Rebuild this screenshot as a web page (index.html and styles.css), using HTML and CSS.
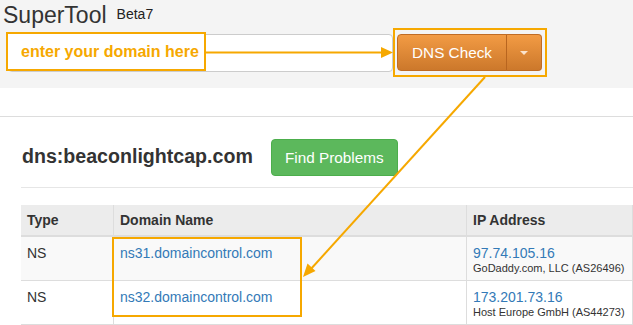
FILE: index.html
```html
<!DOCTYPE html>
<html lang="en">
<head>
<meta charset="utf-8">
<title>SuperTool</title>
<link rel="stylesheet" href="styles.css">
</head>
<body>
<div class="page">
  <header class="topbar">
    <div class="brand">
      <span class="brand-name">SuperTool</span>
      <span class="brand-tag">Beta7</span>
    </div>
    <form class="search">
      <input class="search-input" type="text" aria-label="domain">
      <div class="btn-group">
        <button type="button" class="btn-orange btn-main">DNS Check</button>
        <button type="button" class="btn-orange btn-caret"><span class="caret"></span></button>
      </div>
    </form>
  </header>

  <section class="panel">
    <div class="panel-head">
      <h2 class="panel-title">dns:beaconlightcap.com</h2>
      <button type="button" class="btn-green">Find Problems</button>
    </div>
    <hr class="divider">
    <table class="results">
      <thead>
        <tr>
          <th class="col-type">Type</th>
          <th class="col-name">Domain Name</th>
          <th class="col-ip">IP Address</th>
        </tr>
      </thead>
      <tbody>
        <tr class="odd">
          <td>NS</td>
          <td><a href="#" class="link">ns31.domaincontrol.com</a></td>
          <td><a href="#" class="link">97.74.105.16</a><div class="owner">GoDaddy.com, LLC (AS26496)</div></td>
        </tr>
        <tr>
          <td>NS</td>
          <td><a href="#" class="link">ns32.domaincontrol.com</a></td>
          <td><a href="#" class="link">173.201.73.16</a><div class="owner">Host Europe GmbH (AS44273)</div></td>
        </tr>
      </tbody>
    </table>
  </section>

  <div class="note note-input">enter your domain here</div>
  <svg class="annotations" width="633" height="325" viewBox="0 0 633 325" aria-hidden="true">
    <line x1="206" y1="52.5" x2="384" y2="52.5" class="ann-line"/>
    <polygon points="381,47 393,52.5 381,58" class="ann-fill"/>
    <rect x="394" y="29" width="152" height="47" class="ann-line"/>
    <line x1="485" y1="77" x2="310" y2="270" class="ann-line"/>
    <polygon points="303,277 315.5,271 307.5,263.5" class="ann-fill"/>
    <rect x="113" y="238" width="188" height="78" class="ann-line"/>
  </svg>
</div>
</body>
</html>
```

FILE: styles.css
```css
* { box-sizing: border-box; }

html, body {
  margin: 0;
  padding: 0;
  background: #fff;
}

body {
  font-family: "Liberation Sans", Arial, Helvetica, sans-serif;
  color: #333;
  font-size: 14px;
  line-height: 20px;
  overflow: hidden;
}

.page {
  position: relative;
  width: 633px;
  height: 325px;
  overflow: hidden;
}

/* top bar */
.topbar {
  background: #f4f4f4;
  height: 88px;
  padding-top: 2px;
}

.brand {
  display: flex;
  align-items: flex-start;
  padding-left: 3px;
  height: 26px;
}

.brand-name {
  font-size: 23px;
  line-height: 26px;
  color: #333;
}

.brand-tag {
  font-size: 14px;
  line-height: 16px;
  color: #222;
  margin-left: 10px;
  margin-top: 4px;
}

.search {
  display: flex;
  align-items: flex-start;
  margin: 6px 0 0 8px;
}

.search-input {
  width: 385px;
  height: 38px;
  border: 1px solid #ccc;
  border-radius: 4px;
  background: #fff;
  margin: 0;
  padding: 0 12px;
  font: inherit;
}

.btn-group {
  display: flex;
  margin-left: 4px;
}

.btn-orange {
  height: 37px;
  margin: 0;
  border: 1px solid #c06c24;
  background: linear-gradient(#f29b44, #cc782b);
  color: #fff;
  font-family: inherit;
  font-size: 15.3px;
  line-height: 20px;
  padding: 0;
}

.btn-main {
  width: 110px;
  border-radius: 4px 0 0 4px;
}

.btn-caret {
  width: 36px;
  border-left-color: #b8651f;
  margin-left: -1px;
  border-radius: 0 4px 4px 0;
  display: flex;
  align-items: center;
  justify-content: center;
}

.caret {
  display: block;
  width: 0;
  height: 0;
  border-left: 4px solid transparent;
  border-right: 4px solid transparent;
  border-top: 4px solid #fbe3cc;
  margin-top: 1px;
}

/* panel */
.panel {
  margin: 28px -3px 0 -3px;
  border: 1px solid #ddd;
  border-bottom: 0;
  border-radius: 4px 4px 0 0;
  padding: 22px 0 0 23px;
  height: 220px;
}

.panel-head {
  display: flex;
  align-items: baseline;
}

.panel-title {
  margin: 0;
  font-size: 19.6px;
  line-height: 24px;
  font-weight: bold;
  color: #333;
  padding-left: 1px;
}

.btn-green {
  margin: 0 0 0 18px;
  height: 37px;
  width: 127px;
  border: 1px solid #4cae4c;
  border-radius: 4px;
  background: #5cb85c;
  color: #fff;
  font-family: inherit;
  font-size: 15.3px;
  line-height: 20px;
  padding: 0;
}

.divider {
  margin: 11px 0 0 0;
  border: 0;
  border-top: 1px solid #e6e6e6;
  height: 0;
}

.results {
  margin-top: 17px;
  border-collapse: separate;
  border-spacing: 0;
  width: 612px;
  table-layout: fixed;
}

.results th {
  background: #ececec;
  text-align: left;
  font-weight: bold;
  font-size: 14px;
  line-height: 20px;
  padding: 5px 6px;
  border-bottom: 2px solid #ddd;
  color: #333;
}

.results td {
  vertical-align: top;
  padding: 6px 6px;
  border-bottom: 1px solid #ddd;
  line-height: 20px;
  color: #333;
}

.results th + th,
.results td + td {
  border-left: 1px solid #ddd;
}

.results th:last-child,
.results td:last-child {
  border-right: 1px solid #ddd;
}

.col-type { width: 92px; }
.col-name { width: 353px; }
.col-ip { width: 167px; }

.results tr.odd td {
  background: #f9f9f9;
}

.link {
  color: #337ab7;
  text-decoration: none;
  font-size: 14px;
}

.owner {
  font-size: 11px;
  line-height: 11px;
  color: #333;
}

/* annotations overlay */
.note {
  position: absolute;
  border: 2px solid #f6a800;
  color: #f6a800;
  font-weight: bold;
  font-size: 16px;
}

.note-input {
  left: 6px;
  top: 32px;
  width: 200px;
  height: 39px;
  line-height: 35px;
  padding-left: 13px;
  background: #fff;
}

.annotations {
  position: absolute;
  left: 0;
  top: 0;
  pointer-events: none;
}

.ann-line {
  fill: none;
  stroke: #f6a800;
  stroke-width: 2;
}

.ann-fill {
  fill: #f6a800;
}
```
